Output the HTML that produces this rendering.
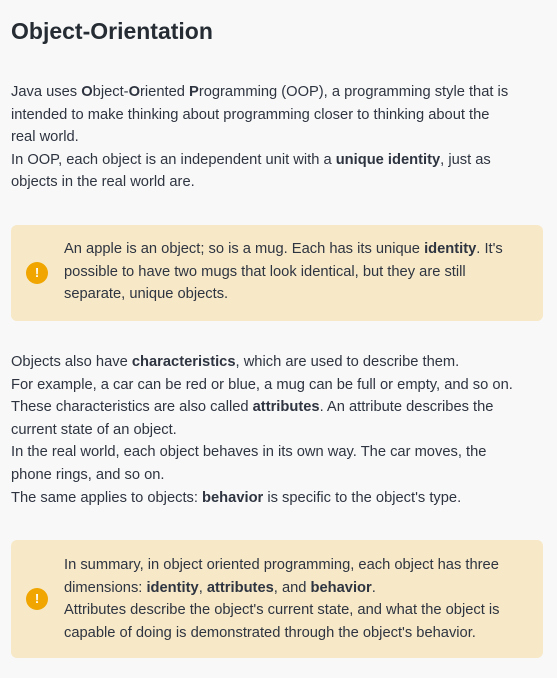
<!DOCTYPE html>
<html><head><meta charset="utf-8"><style>
body{margin:0;background:#f8f8f8;font-family:"Liberation Sans",sans-serif;color:#2e3440;width:557px;height:678px;overflow:hidden}
h1{position:absolute;left:11px;top:18px;margin:0;font-size:23px;font-weight:bold;color:#262c33}
p{position:absolute;left:11px;margin:0;font-size:14.7px;line-height:22.6px;white-space:nowrap}
.c{position:absolute;left:11px;width:532px;background:#f7e9c8;border-radius:6px}
.c p{left:53px}
.i{position:absolute;left:15px;width:22px;height:22px;border-radius:50%;background:#f0a500;color:#fff;font-size:13px;font-weight:bold;text-align:center;line-height:22px}
</style></head><body>
<h1>Object-Orientation</h1>
<p style="top:81px">Java uses <b>O</b>bject-<b>O</b>riented <b>P</b>rogramming (OOP), a programming style that is<br>intended to make thinking about programming closer to thinking about the<br>real world.<br>In OOP, each object is an independent unit with a <b>unique identity</b>, just as<br>objects in the real world are.</p>
<div class="c" style="top:225px;height:96px"><div class="i" style="top:37px">!</div><p style="top:13px">An apple is an object; so is a mug. Each has its unique <b>identity</b>. It's<br>possible to have two mugs that look identical, but they are still<br>separate, unique objects.</p></div>
<p style="top:351px">Objects also have <b>characteristics</b>, which are used to describe them.<br>For example, a car can be red or blue, a mug can be full or empty, and so on.<br>These characteristics are also called <b>attributes</b>. An attribute describes the<br>current state of an object.<br>In the real world, each object behaves in its own way. The car moves, the<br>phone rings, and so on.<br>The same applies to objects: <b>behavior</b> is specific to the object's type.</p>
<div class="c" style="top:540px;height:118px"><div class="i" style="top:48px">!</div><p style="top:14px">In summary, in object oriented programming, each object has three<br>dimensions: <b>identity</b>, <b>attributes</b>, and <b>behavior</b>.<br>Attributes describe the object's current state, and what the object is<br>capable of doing is demonstrated through the object's behavior.</p></div>
</body></html>
